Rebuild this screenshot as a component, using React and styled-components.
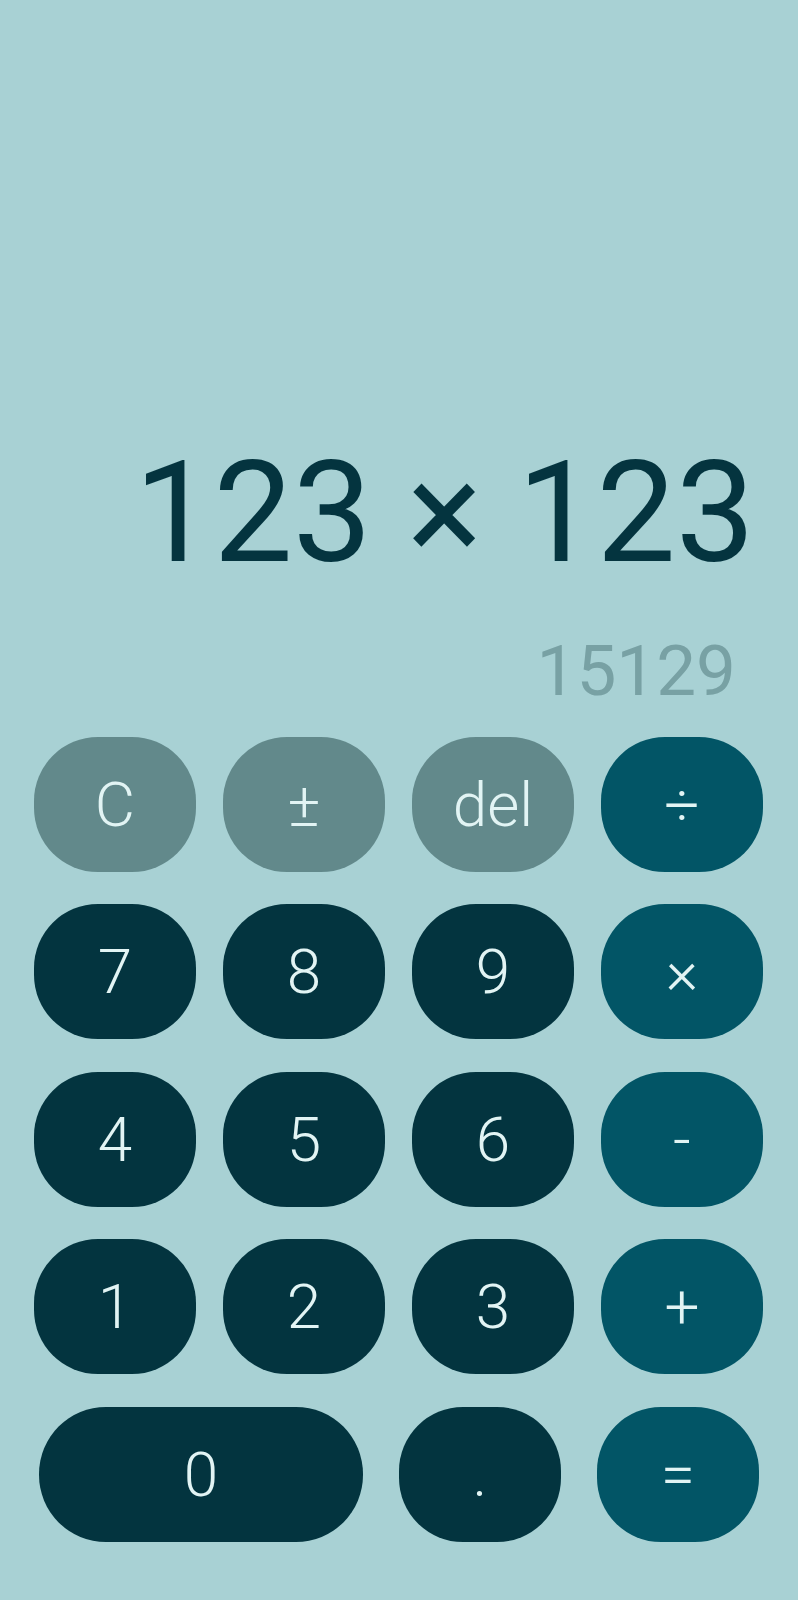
import React from 'react'
import styled, { createGlobalStyle } from 'styled-components'

const GlobalStyle = createGlobalStyle`
  html, body {
    margin: 0;
    padding: 0;
    background-color: #a8d1d4;
  }
  * {
    box-sizing: border-box;
  }
`

const Screen = styled.div`
  width: 798px;
  height: 1600px;
  display: flex;
  flex-direction: column;
  background-color: #a8d1d4;
  font-family: Roboto, "Liberation Sans", sans-serif;
`

const Display = styled.div`
  flex: 1;
  display: flex;
  flex-direction: column;
  justify-content: flex-end;
  align-items: flex-end;
  padding-bottom: 31px;
`

const Expression = styled.div`
  font-size: 141px;
  line-height: 1;
  font-weight: 400;
  color: #04343f;
  padding-right: 43px;
  margin-bottom: 52px;
  white-space: nowrap;
`

const Result = styled.div`
  font-size: 71px;
  line-height: 1;
  font-weight: 400;
  color: #78a1a4;
  padding-right: 62px;
`

const Keypad = styled.div`
  display: grid;
  grid-template-columns: repeat(4, 1fr);
  grid-auto-rows: 135px;
  column-gap: 27px;
  row-gap: 32.6px;
  padding: 0 35px 0 34px;
`

const LastRow = styled.div`
  display: flex;
  gap: 36px;
  height: 135px;
  padding: 0 39px;
  margin: 32.6px 0 58px;
`

const colors = {
  fn: '#62898b',
  num: '#03343f',
  op: '#025566',
}

const Key = styled.button`
  border: none;
  outline: none;
  border-radius: ${(p) => (p.wide ? '67px' : '64px')};
  background-color: ${(p) => colors[p.kind]};
  color: #e2f4f4;
  font-family: Roboto, "Liberation Sans", sans-serif;
  font-weight: 300;
  font-size: 62px;
  display: flex;
  align-items: center;
  justify-content: center;
  padding: 0;
  flex: ${(p) => (p.wide ? 2 : 1)};
  height: 135px;
`

const rows = [
  [['C', 'fn'], ['±', 'fn'], ['del', 'fn'], ['÷', 'op']],
  [['7', 'num'], ['8', 'num'], ['9', 'num'], ['×', 'op']],
  [['4', 'num'], ['5', 'num'], ['6', 'num'], ['-', 'op']],
  [['1', 'num'], ['2', 'num'], ['3', 'num'], ['+', 'op']],
]

const App = () => {
  return (
    <Screen>
      <GlobalStyle />
      <Display>
        <Expression>123 × 123</Expression>
        <Result>15129</Result>
      </Display>
      <Keypad>
        {rows.flat().map(([label, kind]) => (
          <Key key={label} kind={kind}>{label}</Key>
        ))}
      </Keypad>
      <LastRow>
        <Key kind="num" wide>0</Key>
        <Key kind="num">.</Key>
        <Key kind="op">=</Key>
      </LastRow>
    </Screen>
  )
}

export default App
